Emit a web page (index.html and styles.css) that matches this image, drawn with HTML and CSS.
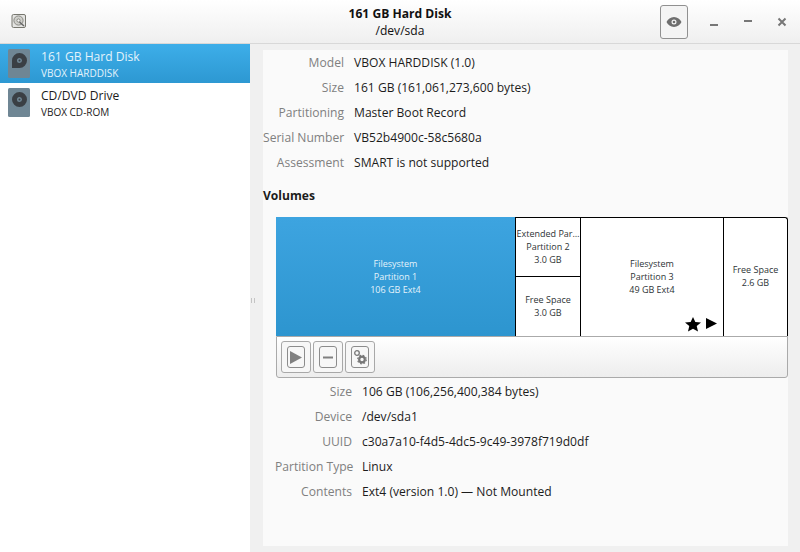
FILE: index.html
```html
<!DOCTYPE html>
<html>
<head>
<meta charset="utf-8">
<title>161 GB Hard Disk</title>
<link rel="stylesheet" href="styles.css">
</head>
<body>
<div class="window">
  <header class="titlebar">
    <div class="app-icon">
      <svg width="16" height="16" viewBox="0 0 16 16"><rect x="1" y="1.5" width="13.5" height="13" rx="1.5" fill="#e4e4e2" stroke="#77776f"/><circle cx="7.5" cy="7.5" r="4.6" fill="#cfcfcb" stroke="#8a8a84"/><circle cx="7.5" cy="7.5" r="1.6" fill="#f4f4f4" stroke="#77776f" stroke-width=".8"/><path d="M8.5 9l4.5 4" stroke="#666" stroke-width="1.5"/></svg>
    </div>
    <div class="title">
      <div class="title-main">161 GB Hard Disk</div>
      <div class="title-sub">/dev/sda</div>
    </div>
    <div class="controls">
      <button class="eye-btn">
        <svg width="16" height="16" viewBox="0 0 16 16"><path fill-rule="evenodd" d="M8 3C4.6 3 1.9 5.4.5 8c1.4 2.6 4.1 5 7.5 5s6.100-2.400 7.500-5C14.100 5.400 11.400 3 8 3zm0 2.500a2.500 2.500 0 1 1 0 5 2.500 2.500 0 0 1 0-5z" fill="#6e6e6e"/><circle cx="8" cy="8" r="1.300" fill="#6e6e6e"/></svg>
      </button>
      <div class="wm-btns">
        <span class="wm wm-min"></span>
        <span class="wm wm-max"></span>
        <svg class="wm-close" width="10" height="10" viewBox="0 0 10 10"><path d="M1.500 1.500l7 7M8.500 1.500l-7 7" stroke="#777" stroke-width="2"/></svg>
      </div>
    </div>
  </header>
  <div class="body">
    <aside class="sidebar">
      <div class="dev dev-selected">
        <svg class="dev-icon" width="22" height="29" viewBox="0 0 22 29"><rect width="22" height="29" rx="1.500" fill="#6f8694"/><path fill-rule="evenodd" d="M11.500 4a7.500 7.500 0 0 1 0 15H4v-7.500A7.500 7.500 0 0 1 11.500 4zm0 5a2.500 2.500 0 1 0 0 5 2.500 2.500 0 0 0 0-5z" fill="#3a3f44"/><circle cx="11.500" cy="11.500" r="1" fill="#3a3f44"/></svg>
        <div class="dev-text">
          <div class="dev-name">161 GB Hard Disk</div>
          <div class="dev-model">VBOX HARDDISK</div>
        </div>
      </div>
      <div class="dev">
        <svg class="dev-icon" width="22" height="29" viewBox="0 0 22 29"><rect width="22" height="29" rx="1.500" fill="#6f8694"/><path fill-rule="evenodd" d="M11.500 4a7.500 7.500 0 1 1 0 15 7.500 7.500 0 0 1 0-15zm0 5a2.500 2.500 0 1 0 0 5 2.500 2.500 0 0 0 0-5z" fill="#3a3f44"/><circle cx="11.500" cy="11.500" r="1" fill="#3a3f44"/></svg>
        <div class="dev-text">
          <div class="dev-name">CD/DVD Drive</div>
          <div class="dev-model">VBOX CD-ROM</div>
        </div>
      </div>
    </aside>
    <div class="gutter"><span class="grip"></span><span class="grip"></span></div>
    <main class="content">
      <dl class="props">
        <dt>Model</dt><dd>VBOX HARDDISK (1.0)</dd>
        <dt>Size</dt><dd>161 GB (161,061,273,600 bytes)</dd>
        <dt>Partitioning</dt><dd>Master Boot Record</dd>
        <dt>Serial Number</dt><dd>VB52b4900c-58c5680a</dd>
        <dt>Assessment</dt><dd>SMART is not supported</dd>
      </dl>
      <h2 class="volumes">Volumes</h2>
      <section class="volume-box">
        <div class="chart">
          <div class="seg seg-main">Filesystem<br>Partition 1<br>106 GB Ext4</div>
          <div class="seg-ext">
            <div class="seg seg-ext-top">Extended Par…<br>Partition 2<br>3.0 GB</div>
            <div class="seg seg-ext-bottom">Free Space<br>3.0 GB</div>
          </div>
          <div class="seg seg-p3">Filesystem<br>Partition 3<br>49 GB Ext4
            <div class="badges">
              <svg width="16" height="15" viewBox="0 0 15 15" preserveAspectRatio="none"><path d="M7.500 0l2.200 4.900 5.300.6-4 3.500 1.200 5.600-4.700-2.800-4.700 2.800L4 9 0 5.500l5.300-.6z" fill="#000"/></svg>
              <svg class="badge-play" width="11" height="11" viewBox="0 0 11 11"><path d="M0 0l11 5.500L0 11z" fill="#000"/></svg>
            </div>
          </div>
          <div class="seg seg-free">Free Space<br>2.6 GB</div>
        </div>
        <div class="toolbar">
          <button class="tool"><span class="tool-inner"><svg width="12" height="13" viewBox="0 0 12 13"><path d="M0 0l12 6.500L0 13z" fill="#808080"/></svg></span></button>
          <button class="tool"><span class="tool-inner"><svg width="12" height="13" viewBox="0 0 12 13"><rect x="1" y="5.500" width="10" height="2" fill="#808080"/></svg></span></button>
          <button class="tool"><span class="tool-inner"><svg width="14" height="16" viewBox="0 0 14 16"><circle cx="4" cy="4" r="2.300" fill="none" stroke="#777" stroke-width="1.300"/><circle cx="9" cy="10.500" r="2.800" fill="none" stroke="#777" stroke-width="2.200"/><circle cx="9" cy="10.500" r="4.300" fill="none" stroke="#777" stroke-width="1.200" stroke-dasharray="1.700 1.700"/></svg></span></button>
        </div>
      </section>
      <dl class="props props-vol">
        <dt>Size</dt><dd>106 GB (106,256,400,384 bytes)</dd>
        <dt>Device</dt><dd>/dev/sda1</dd>
        <dt>UUID</dt><dd>c30a7a10-f4d5-4dc5-9c49-3978f719d0df</dd>
        <dt>Partition Type</dt><dd>Linux</dd>
        <dt>Contents</dt><dd>Ext4 (version 1.0) — Not Mounted</dd>
      </dl>
    </main>
  </div>
</div>
</body>
</html>
```
FILE: styles.css
```css
* { box-sizing: border-box; }
html, body { margin: 0; height: 100%; }
body { font-family: "Open Sans", sans-serif; font-size: 12.1px; color: #2e3436; background: #f0f0f0; overflow: hidden; }
.window { width: 800px; height: 552px; display: flex; flex-direction: column; }

.titlebar { height: 44px; flex: none; display: grid; grid-template-columns: 1fr auto 1fr; align-items: center; background: linear-gradient(#ffffff, #efefef); border-bottom: 1px solid #d8d8d8; }
.app-icon { width: 16px; height: 16px; margin: -2px 0 0 11px; }
.title { text-align: center; line-height: 17px; color: #111; }
.title-main { font-weight: 700; }
.controls { display: flex; align-items: center; justify-content: flex-end; }
.eye-btn { width: 28px; height: 34px; padding: 0; display: flex; align-items: center; justify-content: center; background: #f4f4f4; border: 1px solid #909090; border-radius: 3px; }
.wm-btns { width: 112px; display: flex; align-items: center; padding-left: 22px; }
.wm { display: block; width: 8px; height: 2px; background: #777; }
.wm-min { margin-top: 7px; }
.wm-max { margin-left: 26px; margin-top: -1px; }
.wm-close { margin-left: 25px; }

.body { flex: 1; display: flex; min-height: 0; }
.sidebar { width: 250px; flex: none; background: #fff; }
.dev { height: 39px; display: flex; align-items: center; padding-left: 8px; gap: 11px; color: #1c1c1c; }
.dev-selected { background: linear-gradient(#3daee9, #2d98d2); color: #fff; }
.dev-text { line-height: 16px; padding-top: 3px; }
.dev-model { font-size: 10px; }
.dev-selected .dev-name, .dev-selected .dev-model { color: #e4f3fb; }

.gutter { width: 13px; flex: none; display: flex; justify-content: center; align-items: center; gap: 2px; padding-right: 7px; padding-top: 5px; }
.grip { width: 1px; height: 5px; background: #c4c4c4; }

.content { width: 525px; flex: none; margin: 6px 0; background: #fafafa; }
.props { display: grid; grid-template-columns: 81px 1fr; column-gap: 10px; grid-auto-rows: 25px; margin: 0; align-items: center; }
.props dt { text-align: right; color: #808080; white-space: nowrap; }
.props dd { margin: 0; color: #1c1c1c; white-space: nowrap; }
.props-vol { padding-left: 12px; padding-top: 1px; grid-template-columns: 77px 1fr; }
.volumes { margin: 0; font-size: 12.1px; font-weight: 700; line-height: 17px; padding-top: 12px; color: #1c1c1c; }

.volume-box { margin: 13px 0 0 13px; width: 512px; height: 161px; display: flex; flex-direction: column; }
.chart { height: 119px; flex: none; display: flex; border-top: 1px solid #000; border-right: 1px solid #000; border-top-right-radius: 3px; background: #fff; }
.seg { display: block; font-size: 9px; line-height: 13px; color: #2e3436; text-align: center; }
.seg-main { width: 239px; background: linear-gradient(#3da4e0, #2d95cf); color: #e4f3fb; padding-top: 40px; margin-top: -1px; height: 119px; }
.seg-ext { width: 66px; border-left: 1px solid #000; border-right: 1px solid #000; display: flex; flex-direction: column; }
.seg-ext-top { height: 59px; border-bottom: 1px solid #000; padding-top: 9px; white-space: nowrap; overflow: hidden; }
.seg-ext-bottom { flex: 1; padding-top: 16px; }
.seg-p3 { width: 143px; border-right: 1px solid #000; padding-top: 39px; position: relative; }
.badges { position: absolute; right: 6px; bottom: 4px; display: flex; align-items: flex-start; gap: 5px; }
.badge-play { margin-top: 1px; }
.seg-free { flex: 1; padding-top: 45px; }

.toolbar { height: 42px; flex: none; display: flex; gap: 2px; padding: 4px 0 0 4px; background: linear-gradient(#ffffff, #ededed); border: 1px solid #aaa; border-radius: 0 0 3px 3px; }
.tool { width: 30px; height: 32px; padding: 4px 5px; background: #f7f7f7; border: 1px solid #a8a8a8; border-radius: 3px; }
.tool-inner { display: flex; align-items: center; justify-content: center; width: 18px; height: 22px; border: 1px solid #8c8c8c; border-radius: 3px; }
```
